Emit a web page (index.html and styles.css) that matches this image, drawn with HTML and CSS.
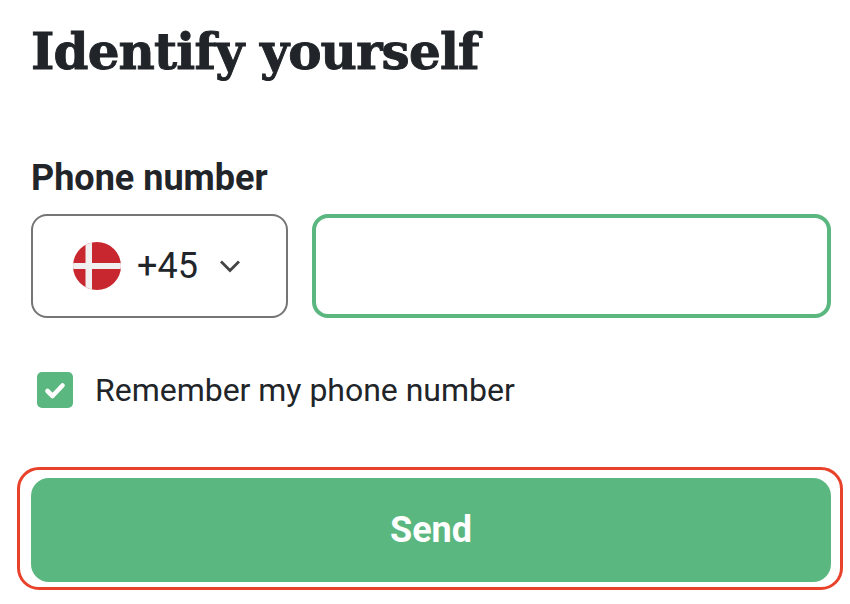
FILE: index.html
```html
<!DOCTYPE html>
<html lang="en">
<head>
<meta charset="utf-8">
<title>Identify yourself</title>
<link rel="stylesheet" href="styles.css">
</head>
<body>
<main class="page">
  <h1 class="title">Identify yourself</h1>
  <label class="label" for="phone">Phone number</label>
  <div class="phone-row">
    <div class="country">
      <svg class="flag" viewBox="0 0 48 48" aria-hidden="true">
        <defs><clipPath id="flag-clip"><circle cx="24" cy="24" r="24"/></clipPath></defs>
        <g clip-path="url(#flag-clip)">
          <rect width="48" height="48" fill="#c8272f"/>
          <rect x="12.5" width="6.5" height="48" fill="#f0f0f0"/>
          <rect y="21" width="48" height="6" fill="#f0f0f0"/>
        </g>
      </svg>
      <span class="code">+45</span>
      <svg class="chevron" viewBox="0 0 22 14" aria-hidden="true">
        <path d="M2 2.5l9 9 9-9" fill="none" stroke="#444" stroke-width="2.8"/>
      </svg>
    </div>
    <input class="number" id="phone" type="text">
  </div>
  <div class="remember">
    <span class="checkbox">
      <svg viewBox="0 0 36 36" aria-hidden="true">
        <path d="M10.5 19l5 5L25.5 13.5" fill="none" stroke="#fff" stroke-width="4.6" stroke-linecap="round" stroke-linejoin="round"/>
      </svg>
    </span>
    <span class="remember-text">Remember my phone number</span>
  </div>
  <div class="send-focus">
    <button class="send" type="button">Send</button>
  </div>
</main>
</body>
</html>
```
FILE: styles.css
```css
html, body {
  margin: 0;
  padding: 0;
  background: #fff;
}
body {
  overflow: hidden;
  font-family: Roboto, "Liberation Sans", sans-serif;
  color: #212529;
}
.page {
  width: 800px;
  padding: 0 19px 0 31px;
  display: flex;
  flex-direction: column;
}
.title {
  margin: 20px 0 0;
  height: 64px;
  font-family: "DejaVu Serif", serif;
  font-weight: 700;
  font-size: 50px;
  line-height: 64px;
  letter-spacing: -0.85px;
  -webkit-text-stroke: 0.9px #212529;
  white-space: nowrap;
}
.label {
  margin-top: 71px;
  height: 45px;
  font-size: 36px;
  font-weight: 700;
  line-height: 46px;
}
.phone-row {
  margin-top: 14px;
  display: flex;
  gap: 24px;
  height: 104px;
}
.country {
  box-sizing: border-box;
  width: 257px;
  border: 2px solid #757575;
  border-radius: 16px;
  display: flex;
  align-items: center;
  padding-left: 40px;
}
.flag {
  width: 48px;
  height: 48px;
  flex: none;
}
.code {
  margin-left: 16px;
  font-size: 36px;
  line-height: 40px;
}
.chevron {
  margin-left: 21px;
  width: 22px;
  height: 14px;
  flex: none;
}
.number {
  box-sizing: border-box;
  flex: 1;
  min-width: 0;
  border: 4px solid #5ab77f;
  border-radius: 16px;
  background: #fff;
  outline: none;
}
.remember {
  margin-top: 54px;
  padding-left: 6px;
  display: flex;
  align-items: center;
  gap: 22px;
  height: 36px;
}
.checkbox {
  width: 36px;
  height: 36px;
  border-radius: 5px;
  background: #5ab77f;
  flex: none;
}
.checkbox svg {
  display: block;
  width: 36px;
  height: 36px;
}
.remember-text {
  font-size: 32px;
  line-height: 36px;
  letter-spacing: -0.02px;
}
.send-focus {
  margin: 59px -12px 0 -14px;
  padding: 8px 9px 5px 11px;
  border: 3px solid #e8432a;
  border-radius: 22px;
}
.send {
  display: block;
  width: 800px;
  height: 104px;
  border: 0;
  border-radius: 18px;
  background: #5ab77f;
  color: #fff;
  font-family: Roboto, "Liberation Sans", sans-serif;
  font-size: 36px;
  font-weight: 700;
}
```
